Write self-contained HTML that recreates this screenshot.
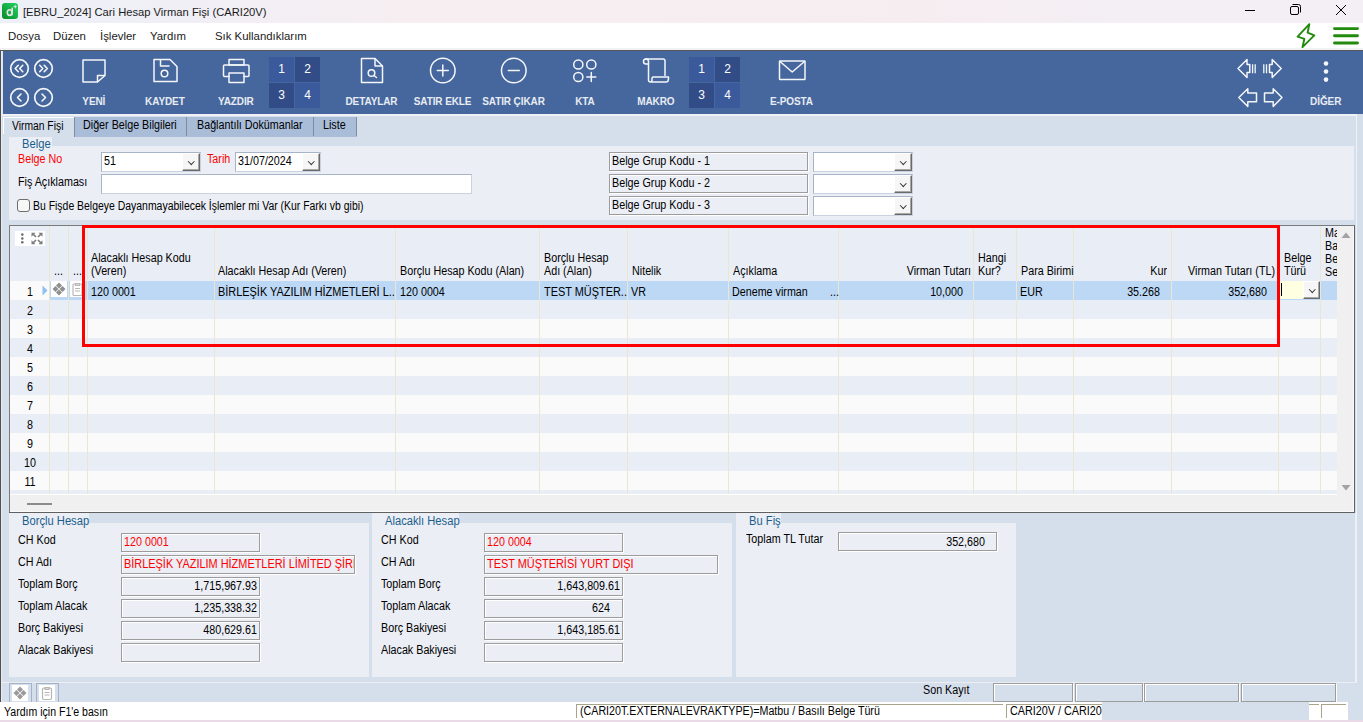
<!DOCTYPE html>
<html><head><meta charset="utf-8">
<style>
*{margin:0;padding:0;box-sizing:border-box}
html,body{width:1363px;height:722px;overflow:hidden;background:#D5DFEC;font-family:"Liberation Sans",sans-serif;font-size:11px;color:#000}
.a{position:absolute}
.t{position:absolute;white-space:nowrap;line-height:13px}
#title{left:0;top:0;width:1363px;height:23px;background:linear-gradient(90deg,#EDF0F8 0%,#F0EFF6 12%,#F6EEF1 30%,#F6EDF1 68%,#F3EFF5 85%,#F3EFF5 100%)}
#menu{left:0;top:23px;width:1363px;height:25px;background:#fff}
#menu .t{font-size:11.4px;top:6.5px;color:#1a1a1a}
#sep{left:0;top:48px;width:1363px;height:3px;background:linear-gradient(#F2F2F3 0,#F2F2F3 2px,#55565B 2px,#55565B 3px)}
#tb{left:3px;top:51px;width:1360px;height:63px;background:#46679D}
.lbl{position:absolute;top:94.5px;font-weight:bold;font-size:10px;color:#E8ECF3;white-space:nowrap;line-height:13px;letter-spacing:-0.1px}
.sq{position:absolute;width:25px;height:25px;color:#fff;font-size:12px;text-align:center;line-height:24px}
.sqL{background:#3B5A9B}.sqD{background:#324C87}
.tah{font-size:12px;transform:scaleX(.895);transform-origin:0 0}
.tr{transform-origin:100% 0}.tc{transform-origin:50% 0}
.inp{background:#fff;border:1px solid #A7B4C6;border-right-color:#C9D2DE;border-bottom-color:#C9D2DE}
.ddb{width:18px;height:18px;background:#F6F6F6;border:1px solid;border-color:#FFF #6A6A6A #6A6A6A #FFF;box-shadow:inset -1px -1px 0 #A8A8A8}
.ddb::after{content:"";position:absolute;left:5.5px;top:4.5px;width:3.5px;height:3.5px;border-right:1.2px solid #333;border-bottom:1.2px solid #333;transform:rotate(45deg)}
.gbox{background:#EBEEF5;border:1px solid #9C9C9C;box-shadow:inset 1px 1px 0 #FFF,1px 1px 0 #FFF}
.rbox{background:#EBEEF5;border:1px solid #9C9C9C;box-shadow:inset 1px 1px 0 #FFF,1px 1px 0 #FFF}
</style></head><body>
<!-- title bar -->
<div id="title" class="a">
  <svg class="a" style="left:2px;top:3px" width="16" height="16" viewBox="0 0 16 16"><defs><linearGradient id="ig" x1="0" y1="1" x2="1" y2="0"><stop offset="0" stop-color="#068A25"/><stop offset="1" stop-color="#25D466"/></linearGradient></defs>
<rect x="0" y="0" width="16" height="16" rx="3" fill="url(#ig)"/>
<ellipse cx="7.6" cy="9.6" rx="2.3" ry="2.8" fill="none" stroke="#E6E2E6" stroke-width="1.6"/>
<path d="M10.2 4.6 Q10.4 8 9.9 12.4" fill="none" stroke="#E6E2E6" stroke-width="1.6"/>
<path d="M13.2 1.6 L13.8 3.1 L15.3 3.7 L13.8 4.3 L13.2 5.8 L12.6 4.3 L11.1 3.7 L12.6 3.1Z" fill="#E6E2E6"/></svg>
  
  <div class="t" style="left:23px;top:4.5px;font-size:11.2px;color:#1b1b1b;line-height:14px">[EBRU_2024] Cari Hesap Virman Fişi (CARI20V)</div>
  <svg class="a" style="left:1240px;top:0" width="123" height="22" viewBox="0 0 123 22">
    <line x1="5" y1="10.5" x2="15" y2="10.5" stroke="#000" stroke-width="1"/>
    <rect x="50.5" y="6.5" width="8" height="8" rx="1.5" fill="none" stroke="#000" stroke-width="1"/>
    <path d="M52.5 4.5 H58.5 Q60.5 4.5 60.5 6.5 V12.5" fill="none" stroke="#000" stroke-width="1"/>
    <path d="M96 5 L106 15 M106 5 L96 15" stroke="#000" stroke-width="1"/>
  </svg>
</div>
<!-- menu -->
<div id="menu" class="a">
  <div class="t" style="left:8px">Dosya</div>
  <div class="t" style="left:53px">Düzen</div>
  <div class="t" style="left:100px">İşlevler</div>
  <div class="t" style="left:150px">Yardım</div>
  <div class="t" style="left:215px">Sık Kullandıklarım</div>
  <svg class="a" style="left:1296px;top:0" width="67" height="25" viewBox="0 0 67 25">
    <path d="M13.3 1.2 L1.6 13.6 L8.4 15.8 L6.5 24.2 L18.3 12.3 L11.6 9.7 Z" fill="none" stroke="#228A0C" stroke-width="1.9" stroke-linejoin="round"/>
    <path d="M38.5 5.6 H61.5 M38.5 12.8 H61.5 M38.5 20 H61.5" stroke="#228A0C" stroke-width="2.9" stroke-linecap="round"/>
  </svg>
</div>
<div id="sep" class="a"></div>
<div class="a" style="left:0;top:51px;width:1px;height:651px;background:#4F4F4F"></div><div class="a" style="left:1px;top:51px;width:1px;height:651px;background:#E9EDF3"></div>
<div class="a" style="left:2px;top:51px;width:1px;height:63px;background:#DCE4F0"></div>
<!-- toolbar -->
<div id="tb" class="a"></div>
<svg class="a" style="left:0;top:51px" width="1363" height="63" viewBox="0 51 1363 63">
<g fill="none" stroke="#F4F6FA" stroke-width="1.5" stroke-linecap="round" stroke-linejoin="round">
  <!-- nav circles -->
  <circle cx="19.5" cy="68.5" r="8.8" stroke-width="1.7"/><circle cx="43.5" cy="68.5" r="8.8" stroke-width="1.7"/>
  <circle cx="19.5" cy="97.5" r="8.8" stroke-width="1.7"/><circle cx="43.5" cy="97.5" r="8.8" stroke-width="1.7"/>
  <path d="M18.3 65.3 L15.2 68.5 L18.3 71.7 M22.8 65.3 L19.7 68.5 L22.8 71.7" stroke-width="1.6"/>
  <path d="M39.7 65.3 L42.8 68.5 L39.7 71.7 M44.2 65.3 L47.3 68.5 L44.2 71.7" stroke-width="1.6"/>
  <path d="M21 94 L17.5 97.5 L21 101" stroke-width="1.6"/>
  <path d="M42 94 L45.5 97.5 L42 101" stroke-width="1.6"/>
  <!-- YENI -->
  <path d="M83 60 H105 V75.5 L97.5 82 H83 Z"/>
  <path d="M97.5 81.5 V75.5 H104.5"/>
  <!-- KAYDET floppy -->
  <path d="M154 59.5 H170 L177 66.5 V81.5 H154 Z"/>
  <path d="M160.5 60 V66 H169"/>
  <circle cx="164.5" cy="73.5" r="3.3"/>
  <!-- YAZDIR printer -->
  <rect x="229" y="59.5" width="15" height="5.5"/>
  <path d="M229 76.5 H224.5 Q223.5 76.5 223.5 75.5 V66 Q223.5 65 224.5 65 H248 Q249 65 249 66 V75.5 Q249 76.5 248 76.5 H244"/>
  <rect x="229" y="73" width="15" height="9.5"/>
  <!-- DETAYLAR -->
  <path d="M361.5 58.5 H375 L382.5 66 V82.5 H361.5 Z"/>
  <path d="M375 59 V66 H382"/>
  <circle cx="371.5" cy="73" r="3.3"/>
  <path d="M374 75.5 L376.5 77.5"/>
  <!-- SATIR EKLE -->
  <circle cx="442.8" cy="70.5" r="12.3"/>
  <path d="M442.8 65 V76 M437.3 70.5 H448.3"/>
  <!-- SATIR CIKAR -->
  <circle cx="513.8" cy="70.5" r="12.3"/>
  <path d="M508.3 70.5 H519.3"/>
  <!-- KTA -->
  <circle cx="578.3" cy="64.5" r="4.6"/><circle cx="591.3" cy="64.5" r="4.6"/>
  <circle cx="578.3" cy="77" r="4.6"/>
  <path d="M591.3 72.5 V81.5 M586.8 77 H595.8"/>
  <!-- MAKRO scroll -->
  <path d="M646 59 H663 Q665 59 665 61 V75.5"/>
  <path d="M646 59 Q643.5 59 643.5 61.5 Q643.5 64 646 64 H648.5 V80 Q648.5 82 650.5 82 H666 Q668.5 82 668.5 78.5 V77 H653 Q652 77 652 79.5 Q652 82 650.5 82"/>
  <path d="M646 59 Q648.5 59 648.5 61.5 V64"/>
  <!-- E-POSTA -->
  <rect x="779.5" y="61" width="25.5" height="18.5" rx="0.5"/>
  <path d="M780 61.5 L792.2 72 L804.5 61.5"/>
  <!-- right arrows -->
  <path d="M1238 68.5 L1247 59.5 V64.5 H1249.8 V72.5 H1247 V77.5 Z"/>
  <path d="M1252.6 64.3 V73.2 M1255.2 64.3 V73.2" stroke-width="1.3" stroke-linecap="butt"/>
  <path d="M1281.2 68.5 L1272.2 59.5 V64.5 H1269.5 V72.5 H1272.2 V77.5 Z"/>
  <path d="M1266.5 64.3 V73.2 M1263.8 64.3 V73.2" stroke-width="1.3" stroke-linecap="butt"/>
  <path d="M1238.8 97.5 L1247.8 88.7 V93 H1256.5 V101.7 H1247.8 V106.5 Z"/>
  <path d="M1282 97.5 L1273.2 88.7 V93 H1264.5 V101.7 H1273.2 V106.5 Z"/>
</g>
<g fill="#F4F6FA"><circle cx="1326" cy="63.5" r="2.3"/><circle cx="1326" cy="71.5" r="2.3"/><circle cx="1326" cy="79.6" r="2.3"/>
<circle cx="1104.5" cy="-10" r="0"/></g>
</svg>
<div class="sq sqL" style="left:269px;top:57px">1</div><div class="sq sqD" style="left:295px;top:57px">2</div>
<div class="sq sqD" style="left:269px;top:83px">3</div><div class="sq sqL" style="left:295px;top:83px">4</div>
<div class="sq sqL" style="left:689px;top:57px">1</div><div class="sq sqD" style="left:715px;top:57px">2</div>
<div class="sq sqD" style="left:689px;top:83px">3</div><div class="sq sqL" style="left:715px;top:83px">4</div>
<div class="lbl" style="left:43.8px;width:100px;text-align:center">YENİ</div>
<div class="lbl" style="left:114.9px;width:100px;text-align:center">KAYDET</div>
<div class="lbl" style="left:185.9px;width:100px;text-align:center">YAZDIR</div>
<div class="lbl" style="left:321.5px;width:100px;text-align:center">DETAYLAR</div>
<div class="lbl" style="left:392.6px;width:100px;text-align:center">SATIR EKLE</div>
<div class="lbl" style="left:463.5px;width:100px;text-align:center">SATIR ÇIKAR</div>
<div class="lbl" style="left:535px;width:100px;text-align:center">KTA</div>
<div class="lbl" style="left:605.8px;width:100px;text-align:center">MAKRO</div>
<div class="lbl" style="left:741.5px;width:100px;text-align:center">E-POSTA</div>
<div class="lbl" style="left:1275.7px;width:100px;text-align:center">DİĞER</div>
<!-- content -->
<div class="a" style="left:2px;top:114px;width:1355px;height:2px;background:#EFF1F5"></div><div class="a" style="left:1356px;top:114px;width:1px;height:569px;background:#EFF1F5"></div>
<!-- tabs -->
<div class="a" style="left:3px;top:117px;width:71px;height:17px;background:#D5DFEC;border-top:1px solid #fff;border-left:1px solid #fff"></div>
<div class="t tah" style="left:12px;top:120px;transform:scaleX(.86)">Virman Fişi</div>
<div class="a" style="left:74px;top:117px;width:283px;height:20px;background:#A9BDD9"></div>
<div class="a" style="left:186px;top:117px;width:1px;height:19px;background:#7E8C9E"></div>
<div class="a" style="left:313px;top:117px;width:1px;height:19px;background:#7E8C9E"></div>
<div class="a" style="left:356px;top:117px;width:1px;height:19px;background:#7E8C9E"></div>
<div class="a" style="left:74px;top:117px;width:1px;height:20px;background:#7E8C9E"></div>
<div class="t tah" style="left:83px;top:119px">Diğer Belge Bilgileri</div>
<div class="t tah" style="left:197px;top:119px">Bağlantılı Dokümanlar</div>
<div class="t tah" style="left:323px;top:119px">Liste</div>
<!-- Belge group -->
<div class="a" style="left:9px;top:137px;width:43px;height:10px;background:#EBEEF5"></div>
<div class="a" style="left:9px;top:146px;width:1345px;height:74px;background:#EBEEF5"></div>
<div class="t tah" style="left:22px;top:137.5px;color:#1B5E8C;font-size:12.5px">Belge</div>
<div class="t tah" style="left:18px;top:153px;color:#F00">Belge No</div>
<div class="t tah" style="left:18px;top:176px">Fiş Açıklaması</div>
<div class="t tah" style="left:207px;top:153px;color:#F00">Tarih</div>
<div class="a inp" style="left:101px;top:152px;width:100px;height:20px"></div>
<div class="t tah" style="left:104px;top:155px">51</div>
<div class="a ddb" style="left:182px;top:153px"></div>
<div class="a inp" style="left:235px;top:152px;width:86px;height:20px"></div>
<div class="t tah" style="left:238px;top:155px">31/07/2024</div>
<div class="a ddb" style="left:302px;top:153px"></div>
<div class="a inp" style="left:101px;top:174px;width:371px;height:20px"></div>
<div class="a" style="left:17px;top:199px;width:13px;height:13px;border:1px solid #6E6E6E;border-radius:3px;background:#F7F7F7"></div>
<div class="t tah" style="left:33px;top:200px;transform:scaleX(.87)">Bu Fişde Belgeye Dayanmayabilecek İşlemler mi Var (Kur Farkı vb gibi)</div>
<div class="a gbox" style="left:609px;top:152px;width:199px;height:19px"></div>
<div class="a gbox" style="left:609px;top:174px;width:199px;height:19px"></div>
<div class="a gbox" style="left:609px;top:196px;width:199px;height:19px"></div>
<div class="t tah" style="left:612px;top:155px">Belge Grup Kodu - 1</div>
<div class="t tah" style="left:612px;top:177px">Belge Grup Kodu - 2</div>
<div class="t tah" style="left:612px;top:199px">Belge Grup Kodu - 3</div>
<div class="a inp" style="left:813px;top:152px;width:100px;height:20px"></div>
<div class="a ddb" style="left:894px;top:153px"></div>
<div class="a inp" style="left:813px;top:174px;width:100px;height:20px"></div>
<div class="a ddb" style="left:894px;top:175px"></div>
<div class="a inp" style="left:813px;top:196px;width:100px;height:20px"></div>
<div class="a ddb" style="left:894px;top:197px"></div>
<!-- grid -->
<div class="a" style="left:9px;top:225px;width:1346px;height:288px;background:#F0F0F0;border:1px solid #7A7A7A;border-right-color:#606060;border-bottom-color:#606060;box-shadow:inset -1px -1px 0 #FAFAFA"></div>
<div class="a" style="left:10px;top:226px;width:1327px;height:55px;background:#E9EDF5"></div>
<div class="a" style="left:10px;top:281px;width:1327px;height:19px;background:#FAFAFA"></div>
<div class="a" style="left:10px;top:300px;width:1327px;height:19px;background:#E9EDF6"></div>
<div class="a" style="left:10px;top:319px;width:1327px;height:19px;background:#FAFAFA"></div>
<div class="a" style="left:10px;top:338px;width:1327px;height:19px;background:#E9EDF6"></div>
<div class="a" style="left:10px;top:357px;width:1327px;height:19px;background:#FAFAFA"></div>
<div class="a" style="left:10px;top:376px;width:1327px;height:19px;background:#E9EDF6"></div>
<div class="a" style="left:10px;top:395px;width:1327px;height:19px;background:#FAFAFA"></div>
<div class="a" style="left:10px;top:414px;width:1327px;height:19px;background:#E9EDF6"></div>
<div class="a" style="left:10px;top:433px;width:1327px;height:19px;background:#FAFAFA"></div>
<div class="a" style="left:10px;top:452px;width:1327px;height:19px;background:#E9EDF6"></div>
<div class="a" style="left:10px;top:471px;width:1327px;height:19px;background:#FAFAFA"></div>
<div class="a" style="left:10px;top:490px;width:1327px;height:4px;background:#E9EDF6"></div>
<div class="a" style="left:50px;top:281px;width:18px;height:19px;background:#BCD8F5"></div>
<div class="a" style="left:69px;top:281px;width:18px;height:19px;background:#BCD8F5"></div>
<div class="a" style="left:88px;top:281px;width:126px;height:19px;background:#BCD8F5"></div>
<div class="a" style="left:215px;top:281px;width:180px;height:19px;background:#BCD8F5"></div>
<div class="a" style="left:396px;top:281px;width:143px;height:19px;background:#BCD8F5"></div>
<div class="a" style="left:540px;top:281px;width:87px;height:19px;background:#BCD8F5"></div>
<div class="a" style="left:628px;top:281px;width:100px;height:19px;background:#BCD8F5"></div>
<div class="a" style="left:729px;top:281px;width:109px;height:19px;background:#BCD8F5"></div>
<div class="a" style="left:839px;top:281px;width:134px;height:19px;background:#BCD8F5"></div>
<div class="a" style="left:974px;top:281px;width:42px;height:19px;background:#BCD8F5"></div>
<div class="a" style="left:1017px;top:281px;width:56px;height:19px;background:#BCD8F5"></div>
<div class="a" style="left:1074px;top:281px;width:97px;height:19px;background:#BCD8F5"></div>
<div class="a" style="left:1172px;top:281px;width:106px;height:19px;background:#BCD8F5"></div>
<div class="a" style="left:1279px;top:281px;width:41px;height:19px;background:#BCD8F5"></div>
<div class="a" style="left:1321px;top:281px;width:16px;height:19px;background:#BCD8F5"></div>
<div class="a" style="left:49px;top:226px;width:1px;height:268px;background:#EBE6D2"></div>
<div class="a" style="left:68px;top:226px;width:1px;height:268px;background:#EBE6D2"></div>
<div class="a" style="left:87px;top:226px;width:1px;height:268px;background:#EBE6D2"></div>
<div class="a" style="left:214px;top:226px;width:1px;height:268px;background:#EBE6D2"></div>
<div class="a" style="left:395px;top:226px;width:1px;height:268px;background:#EBE6D2"></div>
<div class="a" style="left:539px;top:226px;width:1px;height:268px;background:#EBE6D2"></div>
<div class="a" style="left:627px;top:226px;width:1px;height:268px;background:#EBE6D2"></div>
<div class="a" style="left:728px;top:226px;width:1px;height:268px;background:#EBE6D2"></div>
<div class="a" style="left:838px;top:226px;width:1px;height:268px;background:#EBE6D2"></div>
<div class="a" style="left:973px;top:226px;width:1px;height:268px;background:#EBE6D2"></div>
<div class="a" style="left:1016px;top:226px;width:1px;height:268px;background:#EBE6D2"></div>
<div class="a" style="left:1073px;top:226px;width:1px;height:268px;background:#EBE6D2"></div>
<div class="a" style="left:1171px;top:226px;width:1px;height:268px;background:#EBE6D2"></div>
<div class="a" style="left:1278px;top:226px;width:1px;height:268px;background:#EBE6D2"></div>
<div class="a" style="left:1320px;top:226px;width:1px;height:268px;background:#EBE6D2"></div>
<div class="a" style="left:15px;top:231px;width:30px;height:15px;background:#FFF"></div>
<svg class="a" style="left:15px;top:231px" width="30" height="15" viewBox="0 0 30 15">
<g fill="#6E6E6E"><circle cx="7.3" cy="3.6" r="1.3"/><circle cx="7.3" cy="7.5" r="1.3"/><circle cx="7.3" cy="11.3" r="1.3"/></g>
<g stroke="#7C7C7C" stroke-width="1.6" fill="none"><path d="M17.5 2.5 L21 6 M26.5 2.5 L23 6 M17.5 12.5 L21 9 M26.5 12.5 L23 9"/></g>
<g fill="#7C7C7C"><path d="M16.5 1.7 H20.5 L16.5 5.7 Z M27.5 1.7 H23.5 L27.5 5.7 Z M16.5 13.3 H20.5 L16.5 9.3 Z M27.5 13.3 H23.5 L27.5 9.3 Z"/></g>
</svg>
<div class="t tah" style="left:54px;top:265px;">...</div>
<div class="t tah" style="left:73px;top:265px;">...</div>
<div class="t tah" style="left:91px;top:252px;">Alacaklı Hesap Kodu</div>
<div class="t tah" style="left:91px;top:265px;">(Veren)</div>
<div class="t tah" style="left:218px;top:265px;">Alacaklı Hesap Adı (Veren)</div>
<div class="t tah" style="left:400px;top:265px;">Borçlu Hesap Kodu (Alan)</div>
<div class="t tah" style="left:544px;top:252px;">Borçlu Hesap</div>
<div class="t tah" style="left:544px;top:265px;">Adı (Alan)</div>
<div class="t tah" style="left:632px;top:265px;">Nitelik</div>
<div class="t tah" style="left:733px;top:265px;">Açıklama</div>
<div class="t tah" style="left:671px;width:300px;text-align:right;transform-origin:100% 0;top:265px;">Virman Tutarı</div>
<div class="t tah" style="left:978px;top:252px;">Hangi</div>
<div class="t tah" style="left:978px;top:265px;">Kur?</div>
<div class="t tah" style="left:1021px;top:265px;">Para Birimi</div>
<div class="t tah" style="left:867px;width:300px;text-align:right;transform-origin:100% 0;top:265px;">Kur</div>
<div class="t tah" style="left:975px;width:300px;text-align:right;transform-origin:100% 0;top:265px;">Virman Tutarı (TL)</div>
<div class="t tah" style="left:1284px;top:252px;">Belge</div>
<div class="t tah" style="left:1284px;top:265px;">Türü</div>
<div class="a" style="left:1325px;top:227px;width:12px;height:54px;overflow:hidden">
<div class="t tah" style="left:0;top:0px">Ma</div>
<div class="t tah" style="left:0;top:13px">Ba</div>
<div class="t tah" style="left:0;top:26px">Be</div>
<div class="t tah" style="left:0;top:39px">Se</div>
</div>
<div class="t tah" style="left:91px;top:286px;">120 0001</div>
<div class="t tah" style="left:218px;top:286px;transform:scaleX(.91)">BİRLEŞİK YAZILIM HİZMETLERİ L..</div>
<div class="t tah" style="left:400px;top:286px;">120 0004</div>
<div class="t tah" style="left:544px;top:286px;transform:scaleX(.91)">TEST MÜŞTER..</div>
<div class="t tah" style="left:631px;top:286px;">VR</div>
<div class="t tah" style="left:732px;top:286px;">Deneme virman</div>
<div class="t tah" style="left:830px;top:286px;">...</div>
<div class="t tah" style="left:663px;width:300px;text-align:right;transform-origin:100% 0;top:286px;">10,000</div>
<div class="t tah" style="left:1020px;top:286px;">EUR</div>
<div class="t tah" style="left:860px;width:300px;text-align:right;transform-origin:100% 0;top:286px;">35.268</div>
<div class="t tah" style="left:967px;width:300px;text-align:right;transform-origin:100% 0;top:286px;">352,680</div>
<div class="t tah" style="left:10px;width:40px;text-align:center;transform-origin:50% 0;top:286px;font-size:12px">1</div>
<div class="t tah" style="left:10px;width:40px;text-align:center;transform-origin:50% 0;top:305px;font-size:12px">2</div>
<div class="t tah" style="left:10px;width:40px;text-align:center;transform-origin:50% 0;top:324px;font-size:12px">3</div>
<div class="t tah" style="left:10px;width:40px;text-align:center;transform-origin:50% 0;top:343px;font-size:12px">4</div>
<div class="t tah" style="left:10px;width:40px;text-align:center;transform-origin:50% 0;top:362px;font-size:12px">5</div>
<div class="t tah" style="left:10px;width:40px;text-align:center;transform-origin:50% 0;top:381px;font-size:12px">6</div>
<div class="t tah" style="left:10px;width:40px;text-align:center;transform-origin:50% 0;top:400px;font-size:12px">7</div>
<div class="t tah" style="left:10px;width:40px;text-align:center;transform-origin:50% 0;top:419px;font-size:12px">8</div>
<div class="t tah" style="left:10px;width:40px;text-align:center;transform-origin:50% 0;top:438px;font-size:12px">9</div>
<div class="t tah" style="left:10px;width:40px;text-align:center;transform-origin:50% 0;top:457px;font-size:12px">10</div>
<div class="t tah" style="left:10px;width:40px;text-align:center;transform-origin:50% 0;top:476px;font-size:12px">11</div>
<svg class="a" style="left:41px;top:285px" width="8" height="11"><path d="M1.5 0.5 L6.5 5.5 L1.5 10.5 Z" fill="#8EC0F0"/></svg>
<div class="a" style="left:51px;top:281px;width:16px;height:16px;background:#fff"></div>
<svg class="a" style="left:51px;top:281px" width="16" height="16"><g fill="#8F8F8F"><path d="M8 1.5 L11 4.5 L8 7.5 L5 4.5Z M8 8.5 L11 11.5 L8 14.5 L5 11.5Z M4.5 5 L7.5 8 L4.5 11 L1.5 8Z M11.5 5 L14.5 8 L11.5 11 L8.5 8Z"/></g></svg>
<div class="a" style="left:70px;top:281px;width:13px;height:16px;background:#fff"></div>
<svg class="a" style="left:70px;top:281px" width="16" height="16"><g fill="none" stroke="#B8B8B8" stroke-width="1.2"><rect x="3" y="3" width="9" height="11.5" rx="1"/><path d="M5.5 2.5 H9.5 V4.5 H5.5Z M5 7.5 H10 M5 10 H10"/></g></svg>
<div class="a" style="left:1280px;top:281px;width:24px;height:18px;background:#FFFFE1"></div>
<div class="a" style="left:1281px;top:283px;width:1px;height:13px;background:#000"></div>
<div class="a ddb" style="left:1303px;top:281px;width:17px;height:18px"></div>
<svg class="a" style="left:1341px;top:231px" width="10" height="8"><path d="M0.5 7 L5 1.5 L9.5 7Z" fill="#A3A3A3"/></svg>
<svg class="a" style="left:1341px;top:483.5px" width="10" height="8"><path d="M0.5 1 L5 6.5 L9.5 1Z" fill="#A3A3A3"/></svg>
<div class="a" style="left:27px;top:503px;width:25px;height:2px;background:#8C8C8C"></div>
<div class="a" style="left:10px;top:494px;width:1327px;height:1px;background:#FFFFFF"></div>
<div class="a" style="left:82px;top:225px;width:1198px;height:122px;border:3px solid #F00"></div>
<!-- bottom panels -->
<div class="a" style="left:9px;top:512px;width:1346px;height:1px;background:#606060"></div>
<div class="a" style="left:9px;top:513px;width:80px;height:10px;background:#EBEEF5"></div>
<div class="a" style="left:9px;top:523px;width:360px;height:154px;background:#EBEEF5"></div>
<div class="t tah" style="left:22px;top:515px;color:#1B5E8C;font-size:12.5px">Borçlu Hesap</div>
<div class="a" style="left:372px;top:513px;width:87px;height:10px;background:#EBEEF5"></div>
<div class="a" style="left:372px;top:523px;width:360px;height:154px;background:#EBEEF5"></div>
<div class="t tah" style="left:385px;top:515px;color:#1B5E8C;font-size:12.5px">Alacaklı Hesap</div>
<div class="a" style="left:736px;top:513px;width:45px;height:10px;background:#EBEEF5"></div>
<div class="a" style="left:736px;top:523px;width:280px;height:154px;background:#EBEEF5"></div>
<div class="t tah" style="left:749px;top:515px;color:#1B5E8C;font-size:12.5px">Bu Fiş</div>
<div class="t tah" style="left:18px;top:534px;">CH Kod</div>
<div class="a rbox" style="left:121px;top:533px;width:139px;height:19px"></div>
<div class="t tah" style="left:18px;top:556px;">CH Adı</div>
<div class="a rbox" style="left:121px;top:555px;width:234px;height:19px"></div>
<div class="t tah" style="left:18px;top:578px;">Toplam Borç</div>
<div class="a rbox" style="left:121px;top:577px;width:139px;height:19px"></div>
<div class="t tah" style="left:18px;top:600px;">Toplam Alacak</div>
<div class="a rbox" style="left:121px;top:599px;width:139px;height:19px"></div>
<div class="t tah" style="left:18px;top:622px;">Borç Bakiyesi</div>
<div class="a rbox" style="left:121px;top:621px;width:139px;height:19px"></div>
<div class="t tah" style="left:18px;top:644px;">Alacak Bakiyesi</div>
<div class="a rbox" style="left:121px;top:643px;width:139px;height:19px"></div>
<div class="t tah" style="left:124px;top:536px;color:#F00">120 0001</div>
<div class="a" style="left:122px;top:556px;width:232px;height:17px;overflow:hidden"><div class="t tah" style="left:2px;top:2px;color:#F00;transform:scaleX(.91)">BİRLEŞİK YAZILIM HİZMETLERİ LİMİTED ŞİRKETİ</div></div>
<div class="t tah" style="left:-43px;width:300px;text-align:right;transform-origin:100% 0;top:580px;">1,715,967.93</div>
<div class="t tah" style="left:-43px;width:300px;text-align:right;transform-origin:100% 0;top:602px;">1,235,338.32</div>
<div class="t tah" style="left:-43px;width:300px;text-align:right;transform-origin:100% 0;top:624px;">480,629.61</div>
<div class="t tah" style="left:381px;top:534px;">CH Kod</div>
<div class="a rbox" style="left:484px;top:533px;width:139px;height:19px"></div>
<div class="t tah" style="left:381px;top:556px;">CH Adı</div>
<div class="a rbox" style="left:484px;top:555px;width:234px;height:19px"></div>
<div class="t tah" style="left:381px;top:578px;">Toplam Borç</div>
<div class="a rbox" style="left:484px;top:577px;width:139px;height:19px"></div>
<div class="t tah" style="left:381px;top:600px;">Toplam Alacak</div>
<div class="a rbox" style="left:484px;top:599px;width:139px;height:19px"></div>
<div class="t tah" style="left:381px;top:622px;">Borç Bakiyesi</div>
<div class="a rbox" style="left:484px;top:621px;width:139px;height:19px"></div>
<div class="t tah" style="left:381px;top:644px;">Alacak Bakiyesi</div>
<div class="a rbox" style="left:484px;top:643px;width:139px;height:19px"></div>
<div class="t tah" style="left:487px;top:536px;color:#F00">120 0004</div>
<div class="a" style="left:485px;top:556px;width:232px;height:17px;overflow:hidden"><div class="t tah" style="left:2px;top:2px;color:#F00;transform:scaleX(.91)">TEST MÜŞTERİSİ YURT DIŞI</div></div>
<div class="t tah" style="left:320px;width:300px;text-align:right;transform-origin:100% 0;top:580px;">1,643,809.61</div>
<div class="t tah" style="left:310px;width:300px;text-align:right;transform-origin:100% 0;top:602px;">624</div>
<div class="t tah" style="left:320px;width:300px;text-align:right;transform-origin:100% 0;top:624px;">1,643,185.61</div>
<div class="t tah" style="left:746px;top:533px;">Toplam TL Tutar</div>
<div class="a rbox" style="left:838px;top:532px;width:159px;height:19px"></div>
<div class="t tah" style="left:685px;width:300px;text-align:right;transform-origin:100% 0;top:536px;">352,680</div>
<div class="a" style="left:2px;top:682px;width:1355px;height:1px;background:#EDEEF1"></div>
<div class="a" style="left:1355px;top:513px;width:1px;height:169px;background:#EEF2F8"></div>
<div class="a" style="left:9px;top:683px;width:23px;height:19px;border:1px solid #A3B2C8;border-bottom:none;background:#D5DFEC"></div>
<div class="a" style="left:12px;top:685px;width:16px;height:16px;background:#fff"></div>
<div class="a" style="left:36px;top:683px;width:23px;height:19px;border:1px solid #A3B2C8;border-bottom:none;background:#D5DFEC"></div>
<div class="a" style="left:39px;top:685px;width:16px;height:16px;background:#fff"></div>
<svg class="a" style="left:12px;top:685px" width="16" height="16"><g fill="#9A9A9A"><path d="M8 1.5 L11 4.5 L8 7.5 L5 4.5Z M8 8.5 L11 11.5 L8 14.5 L5 11.5Z M4.5 5 L7.5 8 L4.5 11 L1.5 8Z M11.5 5 L14.5 8 L11.5 11 L8.5 8Z"/></g></svg>
<svg class="a" style="left:39px;top:685px" width="16" height="16"><g fill="none" stroke="#B5B5B5" stroke-width="1.2"><rect x="3.5" y="3" width="9" height="11.5" rx="1.5"/><path d="M6 2.5 H10 V4.5 H6Z M5.5 7.5 H10.5 M5.5 10 H10.5"/></g></svg>
<div class="t tah" style="left:923px;top:684px;">Son Kayıt</div>
<div class="a rbox" style="left:993px;top:683px;width:80px;height:19px;background:#D5DFEC"></div>
<div class="a rbox" style="left:1075px;top:683px;width:68px;height:19px;background:#D5DFEC"></div>
<div class="a rbox" style="left:1144px;top:683px;width:95px;height:19px;background:#D5DFEC"></div>
<div class="a rbox" style="left:1241px;top:683px;width:95px;height:19px;background:#D5DFEC"></div>
<div class="a" style="left:0;top:702px;width:1363px;height:18px;background:#FFF"></div>
<div class="a" style="left:0;top:720px;width:1363px;height:2px;background:#EAD9E6"></div>
<div class="t tah" style="left:4px;top:706px;transform:scaleX(.88);">Yardım için F1'e basın</div>
<div class="a" style="left:576px;top:704px;width:427px;height:14px;border-left:1px solid #A8A48C;border-top:1px solid #A8A48C"></div>
<div class="t tah" style="left:580px;top:705px;transform:scaleX(.89);">(CARI20T.EXTERNALEVRAKTYPE)=Matbu / Basılı Belge Türü</div>
<div class="a" style="left:1102px;top:702px;width:207px;height:18px;background:#D5DFEC"></div>
<div class="a" style="left:1348px;top:702px;width:15px;height:18px;background:#D5DFEC"></div><div class="a" style="left:1309px;top:704px;width:10px;height:1px;background:#A8A48C"></div>
<div class="a" style="left:1006px;top:704px;width:96px;height:14px;border-left:1px solid #A8A48C;border-top:1px solid #A8A48C"></div>
<div class="t tah" style="left:1010px;top:705px;transform:scaleX(.9);">CARI20V / CARI20</div>
<div class="a" style="left:1321px;top:704px;width:25px;height:14px;border-left:1px solid #A8A48C;border-top:1px solid #A8A48C"></div>
</body></html>
